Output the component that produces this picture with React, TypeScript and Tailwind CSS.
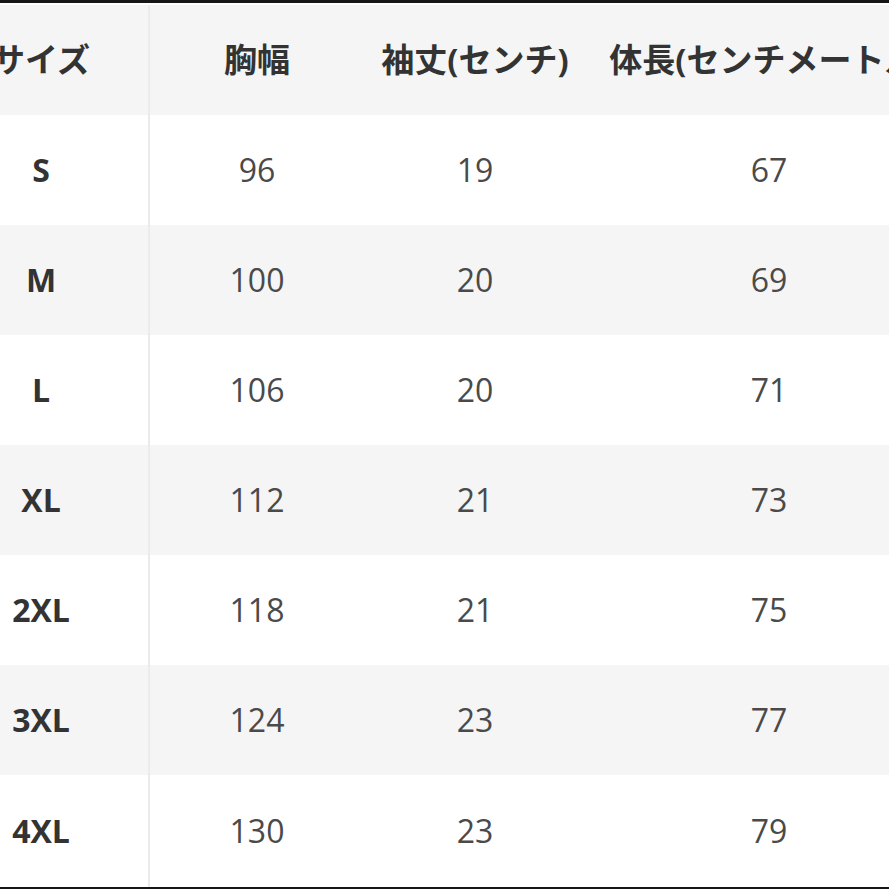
import React from "react";

const rows = [
  ["S", "96", "19", "67"],
  ["M", "100", "20", "69"],
  ["L", "106", "20", "71"],
  ["XL", "112", "21", "73"],
  ["2XL", "118", "21", "75"],
  ["3XL", "124", "23", "77"],
  ["4XL", "130", "23", "79"],
];

const font = { fontFamily: '"Open Sans", "Noto Sans CJK JP", sans-serif' };

export default function App() {
  return (
    <div
      className="w-[889px] h-[889px] overflow-hidden bg-white border-t-[3px] border-b-[2px] border-[#161616] pt-[2px]"
      style={font}
    >
      <div className="-ml-[66px] w-[1018px] grid grid-cols-[216px_214px_222px_366px]">
        <div className="h-[110px] bg-[#f5f5f5] border-r-2 border-[#ebebeb] flex items-center justify-center text-[33px] font-bold text-[#333] whitespace-nowrap">
          サイズ
        </div>
        <div className="h-[110px] bg-[#f5f5f5] flex items-center justify-center text-[33px] font-bold text-[#333] whitespace-nowrap">
          胸幅
        </div>
        <div className="h-[110px] bg-[#f5f5f5] flex items-center justify-center text-[33px] font-bold text-[#333] whitespace-nowrap">
          袖丈(センチ)
        </div>
        <div className="h-[110px] bg-[#f5f5f5] flex items-center justify-center text-[33px] font-bold text-[#333] whitespace-nowrap">
          体長(センチメートル)
        </div>
        {rows.map((r, i) => {
          const bg = i % 2 === 1 ? "bg-[#f5f5f5]" : "bg-white";
          const h = i === rows.length - 1 ? "h-[112px]" : "h-[110px]";
          return (
            <React.Fragment key={r[0]}>
              <div className={`${h} ${bg} border-r-2 border-[#ebebeb] flex items-center justify-center text-[32px] font-bold text-[#333]`}>
                {r[0]}
              </div>
              <div className={`${h} ${bg} flex items-center justify-center text-[32px] text-[#4a4a4a]`}>
                {r[1]}
              </div>
              <div className={`${h} ${bg} flex items-center justify-center text-[32px] text-[#4a4a4a]`}>
                {r[2]}
              </div>
              <div className={`${h} ${bg} flex items-center justify-center text-[32px] text-[#4a4a4a]`}>
                {r[3]}
              </div>
            </React.Fragment>
          );
        })}
      </div>
    </div>
  );
}
